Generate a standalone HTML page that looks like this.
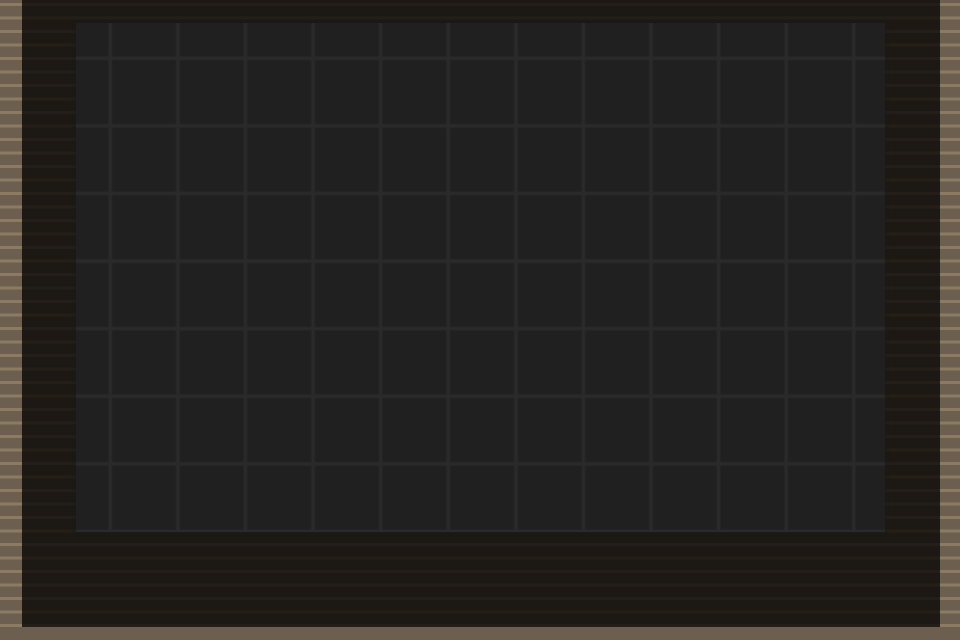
<!DOCTYPE html>
<html><head><meta charset="utf-8"><style>
html,body{margin:0;padding:0}
body{width:960px;height:640px;position:relative;overflow:hidden;
background:repeating-linear-gradient(180deg,#6c5f50 0px,#6c5f50 3px,#8c7b62 3px,#8c7b62 6px,#6c5f50 6px,#6c5f50 13.5px);}
.frame{position:absolute;left:22px;top:0;width:918px;height:627px;
background:repeating-linear-gradient(180deg,#1c1915 0px,#1c1915 3px,#231f18 3px,#231f18 6px,#1c1915 6px,#1c1915 13.5px);}
.bottom{position:absolute;left:0;top:627px;width:960px;height:13px;background:#6c5f50}
.grid{position:absolute;left:76px;top:23px;width:809px;height:509px;background-color:#202020;
background-image:linear-gradient(90deg,transparent 0,transparent 31.5px,#2a2a2a 33.5px,#2a2a2a 35px,transparent 37px),
linear-gradient(180deg,transparent 0,transparent 32.5px,#2a2a2a 34.5px,#2a2a2a 36px,transparent 38px);
background-size:67.6px 100%,100% 67.6px;box-shadow:0 0 3px #1a1a1a;}
</style></head><body>
<div class="frame"></div>
<div class="bottom"></div>
<div class="grid"></div>
</body></html>
